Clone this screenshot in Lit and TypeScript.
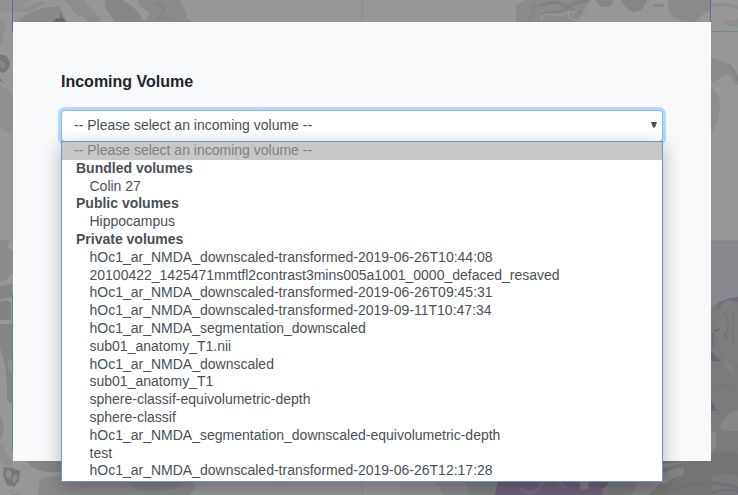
import { LitElement, html, css, svg } from "lit";
import { customElement, state } from "lit/decorators.js";

interface VolumeGroup {
  label: string;
  volumes: string[];
}

const PLACEHOLDER = "-- Please select an incoming volume --";

const GROUPS: VolumeGroup[] = [
  { label: "Bundled volumes", volumes: ["Colin 27"] },
  { label: "Public volumes", volumes: ["Hippocampus"] },
  {
    label: "Private volumes",
    volumes: [
      "hOc1_ar_NMDA_downscaled-transformed-2019-06-26T10:44:08",
      "20100422_1425471mmtfl2contrast3mins005a1001_0000_defaced_resaved",
      "hOc1_ar_NMDA_downscaled-transformed-2019-06-26T09:45:31",
      "hOc1_ar_NMDA_downscaled-transformed-2019-09-11T10:47:34",
      "hOc1_ar_NMDA_segmentation_downscaled",
      "sub01_anatomy_T1.nii",
      "hOc1_ar_NMDA_downscaled",
      "sub01_anatomy_T1",
      "sphere-classif-equivolumetric-depth",
      "sphere-classif",
      "hOc1_ar_NMDA_segmentation_downscaled-equivolumetric-depth",
      "test",
      "hOc1_ar_NMDA_downscaled-transformed-2019-06-26T12:17:28",
    ],
  },
];

/** Dimmed slice viewer that sits behind the dialog. */
@customElement("slice-backdrop")
export class SliceBackdrop extends LitElement {
  static styles = css`
    :host { display: block; }
    svg { display: block; width: 738px; height: 495px; }
    .tissue { filter: blur(0.6px); }
  `;

  private upperLeft() {
    return svg`
      <path d="M0 0H31L22 7L0 8Z" fill="#919191"/>
      <path d="M0 7C12 5 22 11 31 5L40 1L46 3L31 11C20 14 11 9 0 12Z" fill="#8e8e8e"/>
      <path d="M18 22C25 13 43 5 60 7L67 22Z" fill="#898989"/>
      <path d="M63 0H84C88 8 97 10 101 22H88C81 13 77 19 72 8Z" fill="#8c8c8c"/>
      <path d="M105 0H122C131 5 141 12 143 22H115C110 14 103 9 105 0Z" fill="#868686"/>
      <path d="M138 0H180C183 8 188 12 186 18L193 22H142C149 17 153 13 145 9C139 6 137 4 138 0Z" fill="#8a8a8a"/>
      <path d="M154 4C162 5 168 8 161 14C155 18 162 20 175 19" fill="none" stroke="#858585" stroke-width="4"/>
      <path d="M53 22L57 18L60 19L61 11L62 18L65 20V22Z" fill="#666"/>
      <path d="M0 22L6 24L2 42L0 45Z" fill="#8e8e8e"/>
      <path d="M0 55C6 54 9 58 10 64C8 71 5 74 0 72Z" fill="#777"/>
      <path d="M0 60Q7 62 5 69L0 67Z" fill="#868686"/>
      <path d="M0 78L4 83L0 81Z" fill="#777"/>
      <path d="M0 85C6 88 10 91 13 96V134C7 135 3 130 0 126Z" fill="#8f8f8f"/>
    `;
  }

  private lowerLeft() {
    return svg`
      <path d="M0 241H9L8 248L13 251V272C9 278 5 281 0 282Z" fill="#8b8b8b"/>
      <path d="M0 286L12 284V297L0 299Z" fill="#848484"/>
      <path d="M0 302C5 299 9 300 11 303V320H0Z" fill="#838383"/>
      <path d="M0 324H13V405L7 401C8 383 6 363 0 348Z" fill="#858585"/>
      <path d="M8 361Q12 357 13 362V374Q8 373 8 361Z" fill="#929292"/>
      <path d="M0 415Q5 424 3 435L0 440Z" fill="#8a8a8a"/>
      <path d="M0 444Q12 458 13 468L3 464L0 460Z" fill="#8e8e8e"/>
      <path d="M4 467L12 468L20 471L19 481L14 487L7 485L3 475Z" fill="#777"/>
      <path d="M8 469L12 473L10 480L5 476ZM15 474L18 477L14 484L12 479Z" fill="#8d8d8d"/>
      <path d="M7 491H15M11 494H20" stroke="#858585"/>
      <path d="M27 461H70V470C56 474 34 474 27 461Z" fill="#858585"/>
      <path d="M38 495L40 480C52 474 66 477 75 480H194V488L190 495Z" fill="#898989"/>
      <path d="M127 481H188Q177 492 146 491Q130 489 127 481Z" fill="#828282"/>
    `;
  }

  private upperRight() {
    return svg`
      <path d="M516 4L526 0H590L582 15L577 22H516Z" fill="#8b8b8b"/>
      <path d="M528 22Q538 12 532 3" fill="none" stroke="#868686" stroke-width="5"/>
      <path d="M540 6C549 2 559 0 566 7C574 3 580 2 589 0" fill="none" stroke="#808080" stroke-width="3"/>
      <path d="M541 15C550 10 561 14 570 8L581 13" fill="none" stroke="#828282" stroke-width="3"/>
      <path d="M541 20C541 11 553 15 563 15L569 11L568 17L579 22M572 13L578 10" fill="none" stroke="#999" stroke-width="1.500"/>
      <path d="M596 0H613Q613 8 604 7Q597 7 596 0ZM621 0H647Q644 12 633 12Q624 8 621 0Z" fill="#868686"/>
      <path d="M653 4H665L663 7H655Z" fill="#878787"/>
      <path d="M668 0H711V11C700 12 700 22 692 22C678 22 667 18 668 0Z" fill="#8a8a8a"/>
      <path d="M711 3Q727 2 738 6V9Q724 5 711 8ZM727 21L738 19V28L724 24Z" fill="#8e8e8e"/>
      <path d="M711 58C721 59 723 65 731 64L738 76V86L728 74L711 83Z" fill="#8b8b8b"/>
      <path d="M728 66Q733 67 738 81" fill="none" stroke="#828282" stroke-width="2"/>
      <path d="M711 87C721 94 721 107 719 114C717 124 714 131 711 132Z" fill="#8c8c8c"/>
    `;
  }

  private lowerRight() {
    return svg`
      <rect x="711" y="241" width="40" height="260" fill="#86888d"/>
      <path d="M400 480H470L485 500H400Z" fill="#919191"/>
      <path d="M433 480H500V500H447Z" fill="#88888d"/>
      <path d="M464 480H500V500H472Z" fill="#808084"/>
      <path d="M706 311L713 306L719 302L728 299L745 296V500H600V481H663L706 461Z" fill="#7b7b7b"/>
      <path d="M717 311L719 302L728 299L745 295V303L730 300L723 302Z" fill="#746883"/>
      <path d="M722 306Q729 295 735 306L745 330V369Q731 360 724 356L719 343Q713 332 722 306Z" fill="#7e7e7e"/>
      <path d="M724 312Q730 319 727 334M733 312V345M715 390Q728 378 734 389" fill="none" stroke="#767676" stroke-width="2"/>
      <path d="M714 331L720 329M724 332L727 339M713 333V348M712 431V450" fill="none" stroke="#71657d" stroke-width="1.500"/>
      <path d="M710 348L716 357L722 361H710ZM710 400L715 405L714 409L720 410L710 411Z" fill="#70627c"/>
      <path d="M724 358L735 369L734 376L724 367Z" fill="#828282"/>
      <path d="M745 408Q725 412 720 426L722 431L745 431Z" fill="#87878a"/>
      <path d="M710 430L716 433V446L711 453Z" fill="#88888b"/>
      <path d="M708 455Q725 450 745 455V477Q717 467 663 490V481L708 461Z" fill="#757575"/>
      <path d="M640 500L663 461H712V495Z" fill="#757575"/>
      <path d="M663 493Q700 476 738 488" fill="none" stroke="#727272" stroke-width="3"/>
      <path d="M663 473L676 468L684 467L683 475L673 478L663 485Z" fill="#858588"/>
      <path d="M663 464L680 463L663 469Z" fill="#848484"/>
      <path d="M494 500L498 480H612L602 490L604 500Z" fill="#6d6278"/>
      <path d="M520 489Q533 498 541 485T566 488" fill="none" stroke="#766b80" stroke-width="3"/>
      <path d="M579 480H589L588 489L581 490Z" fill="#817f86"/>
      <path d="M628 500L640 480H664L643 500Z" fill="#858589"/>
      <path d="M712 493Q726 487 738 492" fill="none" stroke="#766885" stroke-width="2"/>
    `;
  }

  render() {
    return html`
      <svg viewBox="0 0 738 495" aria-hidden="true">
        <rect width="738" height="495" fill="#979797"/>
        <g class="tissue">
          ${this.upperLeft()}${this.lowerLeft()}${this.upperRight()}${this.lowerRight()}
        </g>
        <path d="M362 0V495M0 240.500H738" fill="none" stroke="#8c8c8c"/>
        <path d="M12.500 0V32M710.500 0V22" stroke="#6c619b"/>
        <path d="M12.500 293V451" stroke="#4d9258"/>
        <path d="M711 31.500H738" stroke="#6a936f"/>
      </svg>
    `;
  }
}

/** Select control shown with its option list open. */
@customElement("volume-select")
export class VolumeSelect extends LitElement {
  static styles = css`
    :host { display: block; position: relative; }
    .control {
      box-sizing: border-box;
      height: 32px;
      display: flex;
      align-items: center;
      justify-content: space-between;
      padding: 0 5px 2px 12px;
      border: 1px solid #80bdff;
      border-radius: 4px;
      background: #fff;
      box-shadow: 0 0 0 3px #b8d7fb;
      color: #495057;
      font-size: 14px;
      white-space: nowrap;
    }
    .arrow { width: 6px; height: 6px; fill: #495057; }
    .menu {
      position: absolute;
      top: 31px;
      left: 0;
      right: 0;
      box-sizing: border-box;
      height: 341px;
      border: 1px solid #7094d2;
      background: #fff;
      box-shadow: 0 5px 18px rgba(0, 0, 0, 0.28);
      color: #495057;
      font-size: 14px;
      line-height: 17.8px;
      white-space: nowrap;
    }
    .placeholder { padding-left: 12px; height: 17.8px; background: #c8c8c8; color: #808080; line-height: 17px; }
    .group { padding-left: 14px; font-weight: 700; }
    .option { padding-left: 27.500px; }
  `;

  @state() private value = PLACEHOLDER;

  render() {
    return html`
      <div class="control">
        <span>${this.value}</span>
        <svg class="arrow" viewBox="0 0 6 6"><path d="M0 0H6L4 5.500H2Z" /></svg>
      </div>
      <div class="menu" role="listbox">
        <div class="placeholder">${PLACEHOLDER}</div>
        ${GROUPS.map(
          (group) => html`
            <div class="group">${group.label}</div>
            ${group.volumes.map((name) => html`<div class="option" role="option">${name}</div>`)}
          `
        )}
      </div>
    `;
  }
}

@customElement("app-root")
export class AppRoot extends LitElement {
  static styles = css`
    :host {
      display: grid;
      width: 738px;
      height: 495px;
      overflow: hidden;
      font-family: "Liberation Sans", Arial, sans-serif;
    }
    slice-backdrop, .dialog { grid-area: 1 / 1; }
    .dialog {
      z-index: 1;
      box-sizing: border-box;
      width: 698px;
      height: 439px;
      margin: 22px 0 0 13px;
      padding: 48px;
      background: #f8f9fb;
    }
    .title {
      margin: 0 0 16px;
      color: #212529;
      font-size: 16px;
      font-weight: 700;
      line-height: 24px;
    }
  `;

  render() {
    return html`
      <slice-backdrop></slice-backdrop>
      <section class="dialog">
        <h1 class="title">Incoming Volume</h1>
        <volume-select></volume-select>
      </section>
    `;
  }
}
